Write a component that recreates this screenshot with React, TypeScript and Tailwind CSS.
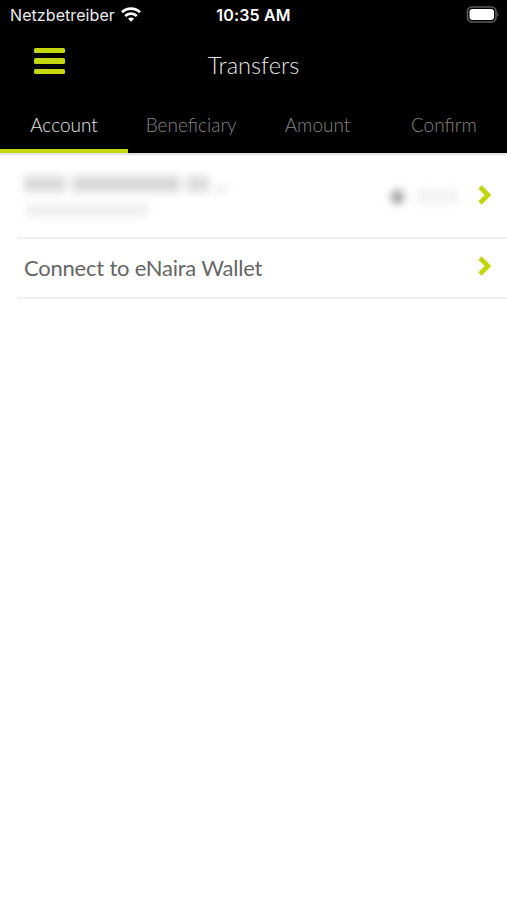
import React, { useState } from "react";
import clsx from "clsx";

const tabs = ["Account", "Beneficiary", "Amount", "Confirm"];

function StatusBar() {
  return (
    <div className="h-[30px] grid grid-cols-3 items-center pl-[10px] pr-[8px] font-['Inter'] text-white">
      <div className="flex items-center gap-[6px]">
        <span className="text-[16px] leading-[30px] tracking-[0.08px] text-[#ececec]">Netzbetreiber</span>
        <svg className="-mt-[2px]" width="20" height="15" viewBox="0 0 20 15" fill="none" stroke="white" strokeWidth="2.7">
          <path d="M1 5.3C6 .5 14 .5 19 5.3" />
          <path d="M4.2 9C7.5 5.8 12.5 5.8 15.8 9" />
          <path d="M10 14.8l-3-3.1c1.7-1.5 4.3-1.5 6 0z" fill="white" stroke="none" />
        </svg>
      </div>
      <span className="-ml-[2px] text-center text-[16px] leading-[30px] font-semibold tracking-[0.15px]">10:35 AM</span>
      <div className="flex justify-end pb-[2px]">
        <svg width="33" height="17" viewBox="0 0 33 17">
          <rect x="1.5" y="1" width="28.5" height="15" rx="4.5" fill="none" stroke="#5c5c5c" strokeWidth="1.6" />
          <rect x="3.5" y="3" width="24.5" height="11" rx="3" fill="white" />
          <path d="M31.3 6.2c1.6.7 1.6 3.9 0 4.6z" fill="#5c5c5c" />
        </svg>
      </div>
    </div>
  );
}

function Chevron() {
  return (
    <svg width="14" height="20" viewBox="0 0 14 20" fill="none" stroke="#bfd70b" strokeWidth="4.6">
      <path d="M2 2l8 8-8 8" />
    </svg>
  );
}

function App() {
  const [active, setActive] = useState<string>("Account");

  return (
    <div className="w-full h-[900px] bg-white font-['Lato',sans-serif] overflow-hidden">
      <header className="bg-black">
        <StatusBar />
        <div className="h-[70px] grid grid-cols-3 items-start px-[34px]">
          <button className="w-[31px] mt-[18px] flex flex-col gap-[5px]">
            <span className="w-full h-[5.4px] rounded-[1.5px] bg-[#c5d80d]" />
            <span className="w-full h-[5.4px] rounded-[1.5px] bg-[#c5d80d]" />
            <span className="w-full h-[5.4px] rounded-[1.5px] bg-[#c5d80d]" />
          </button>
          <h1 className="pt-[20px] text-center text-[23.6px] leading-[30px] font-light text-[#e6e6e6]">Transfers</h1>
        </div>
        <div className="h-[53px] grid grid-cols-[128px_1fr_1fr_1fr]">
          {tabs.map((tab) => (
            <button
              key={tab}
              onClick={() => setActive(tab)}
              className={clsx(
                "h-[53px] pt-[1px] text-[19px] font-light border-b-4",
                active === tab ? "text-[#e6e6e6] border-[#c3d80f]" : "text-[#858585] border-transparent"
              )}
            >
              {tab}
            </button>
          ))}
        </div>
      </header>
      <div className="h-[3px] bg-[#e4e4e4] border-b border-[#f5f5f5]" />

      <main className="pl-[17px]">
        <div className="h-[83px] flex items-start justify-between border-b-2 border-[#f1f1f1] pl-[7px] pr-[15px]">
          {/* masked account name and number */}
          <div className="pt-[20px]">
            <div className="flex items-center gap-[6px] blur-[4px]">
              <span className="w-[42px] h-[16px] bg-[#dadada]" />
              <span className="w-[108px] h-[16px] bg-[#d8d8d8]" />
              <span className="w-[23px] h-[16px] bg-[#dcdcdc]" />
              <span className="w-[12px] h-[4px] mt-[10px] bg-[#dedede]" />
            </div>
            <div className="w-[122px] h-[14px] mt-[11px] ml-[2px] bg-[#f0f0f0] blur-[4px]" />
          </div>
          <div className="h-[77px] flex items-center">
            <span className="w-[13px] h-[14px] mt-[4px] rounded-full bg-[#999999] blur-[4px]" />
            <span className="w-[42px] h-[15px] mt-[3px] ml-[13px] mr-[19px] bg-[#f3f3f3] blur-[4px]" />
            <Chevron />
          </div>
        </div>
        <div className="h-[60px] flex items-center justify-between border-b-2 border-[#f1f1f1] pl-[7px] pr-[15px]">
          <span className="text-[22px] leading-[30px] tracking-[-0.22px] text-[#666666]">Connect to eNaira Wallet</span>
          <div className="pb-[4px]">
            <Chevron />
          </div>
        </div>
      </main>
    </div>
  );
}

export default App;
